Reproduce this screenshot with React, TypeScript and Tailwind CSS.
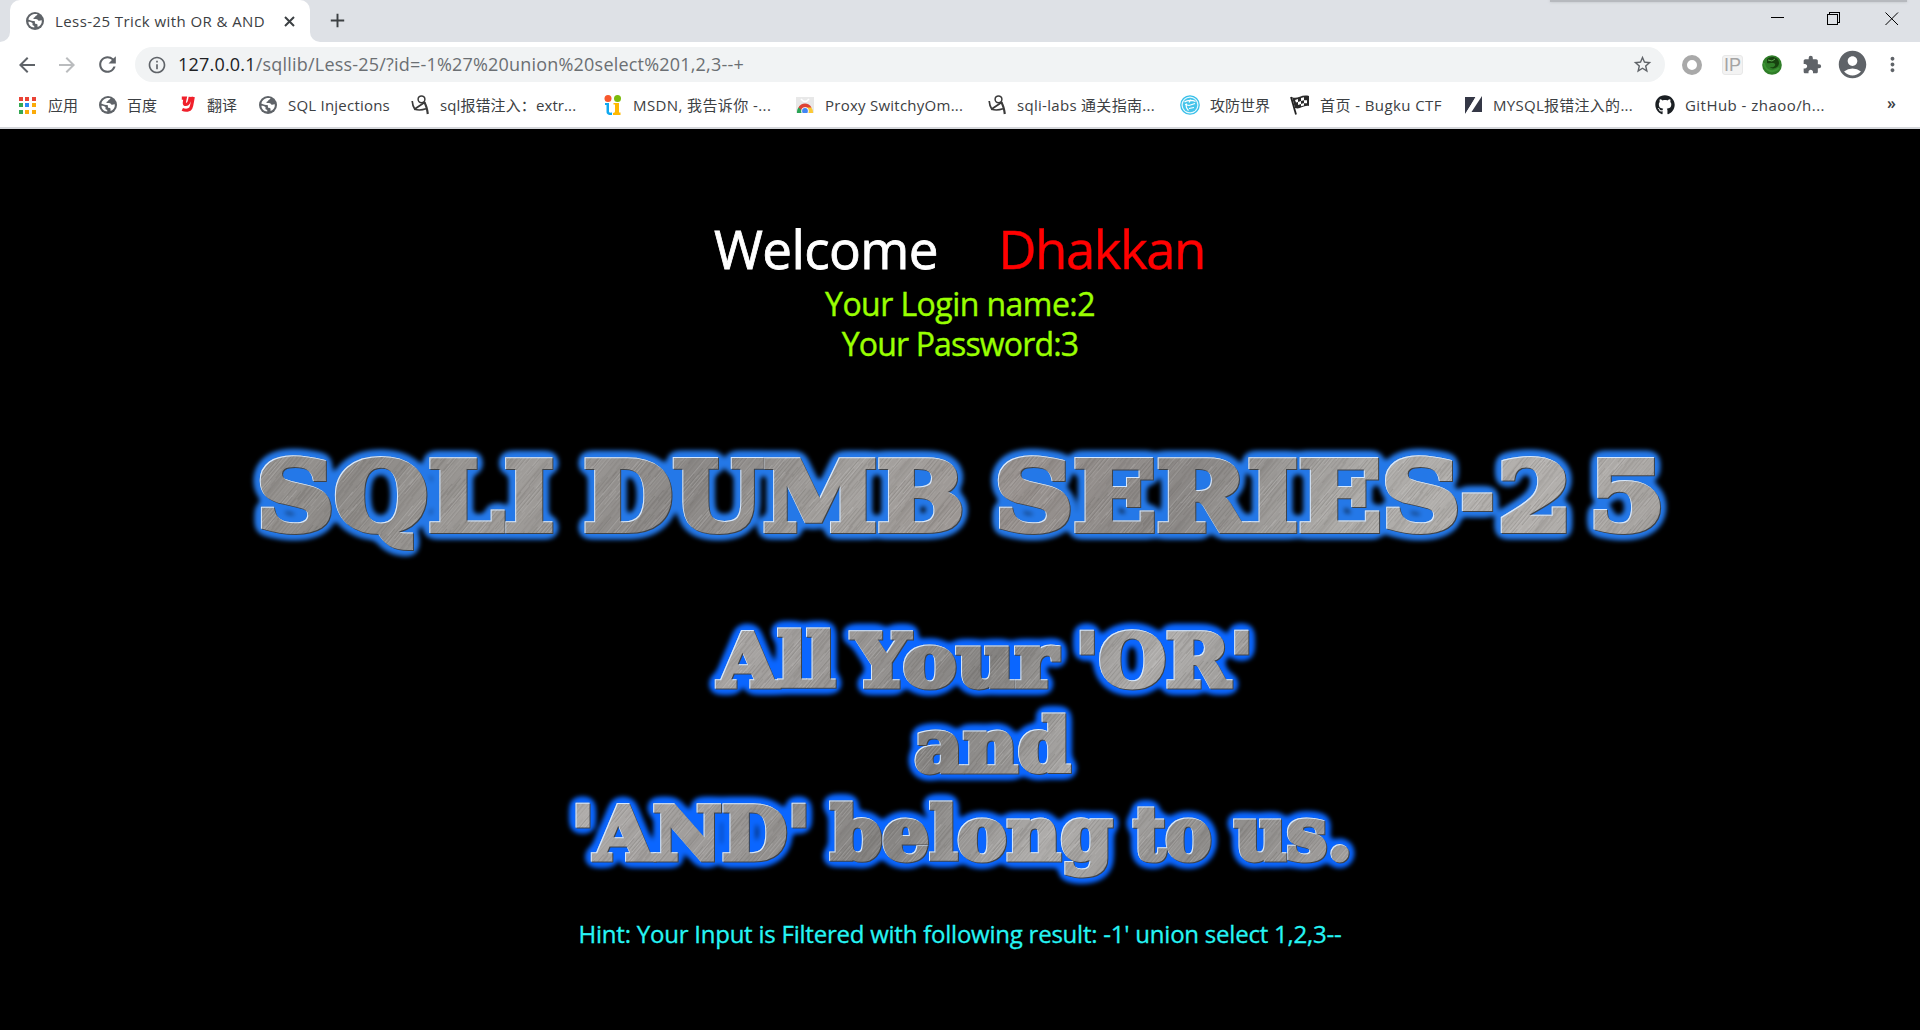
import React from "react";
import {
  MdAccountCircle, MdArrowBack, MdArrowForward, MdExtension, MdInfoOutline,
  MdMoreVert, MdRefresh, MdStarBorder, MdAdd,
} from "react-icons/md";
import { FaGithub } from "react-icons/fa";

const ui = "font-['Open_Sans','Noto_Sans_CJK_SC',sans-serif]";

/* Dark disc with light continents, used for sites without a favicon. */
function Globe() {
  return (
    <svg viewBox="0 0 18 18" className="size-[18px]">
      <circle cx="9" cy="9" r="9" fill="#5f6368" />
      <path d="M11.300 2c.3 1-.5 1.400-1.300 1.700-.9.400-.6 1.300-1.600 1.700-.8.300-1.200.8-.9 1.400.6.500 2.200.2 3.400.5 1 .3 1 1.300 1.900 1.500 1 .3 1.600-.6 3-.4.300 3-1.400 5.600-4.100 6.600-.5-1.200.2-1.900-.5-2.700-.7-.6-1.800-.2-2.200-1.100-.3-.9.300-1.600-.6-2.100-1.700-.2-3.600-.3-6.100-1.700C2.900 4.700 5 2.400 8 1.900z" fill="#fff" />
      <path d="M2.400 9.800c1.500 0 3.100.3 4 1.300.6 1-.3 1.500.3 2.200.6.600 1.500.5 1.600 1.300v1C4.900 15.200 2.600 13 2.400 9.800z" fill="#fff" />
    </svg>
  );
}

function AppsIcon() {
  const colors = ["#ea4335", "#ea4335", "#ea4335", "#34a853", "#2b8af7", "#fbab09", "#34a853", "#fbab09", "#fbab09"];
  return (
    <span className="mr-1 grid w-[17px] grid-cols-3 gap-[2.5px]">
      {colors.map((c, i) => <i key={i} className="size-1" style={{ background: c }} />)}
    </span>
  );
}

function YoudaoIcon() {
  return (
    <svg viewBox="0 0 14 16" className="mb-0.5 h-4 w-3.5" fill="none" stroke="#f0202b" strokeWidth="3.200">
      <path d="M.8 2.200h3.400c-.8 3.500-1.800 6.300.8 6.300 2.300 0 3.600-3 4.200-7.600M12.300.8C11.300 5 11.300 9 9.800 12c-1 2.200-5 3-8.500 1.400" />
    </svg>
  );
}

function FigureIcon() {
  return (
    <svg viewBox="0 0 19 20" className="h-5 w-[19px]" fill="none" stroke="#3a3a3a">
      <circle cx="10.500" cy="4.300" r="3.400" strokeWidth="1.500" />
      <path d="M1.200 6c.3 3.500 1 6 2.500 8l10.500-7" strokeWidth="1.700" />
      <path d="M13.200 7c1.500 2.500 3 7 3.600 12" strokeWidth="2.200" />
      <path d="M3.500 14.300c3.500 1 8 .7 11.500-.5" strokeWidth="1.600" />
    </svg>
  );
}

function MsdnIcon() {
  return (
    <svg viewBox="0 0 18 20" className="h-5 w-[18px]">
      <circle cx="4" cy="3.500" r="3.500" fill="#f8582c" />
      <circle cx="13.500" cy="3.500" r="3.500" fill="#7cbb0b" />
      <path d="M1 8h4v8.500c0 1.200 1.500 1.300 3 1v2.500c-4 .5-5.500-1-5.500-3.200V10H1z" fill="#10a8f0" />
      <path d="M9 20v-2c1.500 0 2-.7 2-2V9.500H9.500V8H15v9.500h1.500V20z" fill="#ffb900" />
    </svg>
  );
}

function StoreIcon() {
  return (
    <svg viewBox="0 0 18 16" className="h-4 w-[18px]">
      <path d="M0 0h18v16H0z" fill="#e8e8e8" />
      <path d="M5 2q4 5 8 0" stroke="#fff" strokeWidth="1.500" fill="none" />
      <path d="M1 16a8 8 0 0 1 3-7l4 7z" fill="#28a454" />
      <path d="M17 16a8 8 0 0 0-2-6h-5v6z" fill="#fcc934" />
      <path d="M2.500 10.500C5 5 13 5 15.500 10.500H9l-3 3z" fill="#de4335" />
      <circle cx="9" cy="14" r="3.800" fill="#fff" /><circle cx="9" cy="14" r="2.900" fill="#4285f4" />
    </svg>
  );
}

function XctfIcon() {
  return (
    <svg viewBox="0 0 20 20" className="size-5">
      <circle cx="10" cy="10" r="9.200" fill="#e9f8fd" stroke="#38bfe9" strokeWidth="1.300" />
      <circle cx="10" cy="10" r="7.300" fill="#45c4ea" />
      <path d="M4.500 7c3-2 8-2 11-.5M5 9.500l4 1 6-2M6.500 8.500c-1 3 0 5 2 7M9 13.500l5-1M11 4.500l-2 3" stroke="#fff" strokeWidth="1.200" fill="none" />
    </svg>
  );
}

function FlagIcon() {
  return (
    <svg viewBox="0 0 20 20" className="size-5">
      <path d="M1 2l5 17.500" stroke="#222" strokeWidth="1.800" />
      <path d="M2 2c5 3 9-3 17-1v10c-6-1-9 4-14 2z" fill="#2a2a2a" />
      <path d="M5 5l3-1v3l-2 .5zM11 3l3-.8v3l-3 .8zM8 7l3-1v3l-3 1zM14 5.200l3 0v3l-3 0zM11 9l3-1v2.500l-3 .8z" fill="#fff" />
    </svg>
  );
}

function SlashIcon() {
  return (
    <svg viewBox="0 0 17 18" className="h-[18px] w-[17px]" fill="#343746">
      <path d="M0 1h11L0 18zM17 0v16H6.500z" /><path d="M11.500 0L1 18" stroke="#fff" strokeWidth="1" />
    </svg>
  );
}

const bookmarks: { icon: React.ReactNode; label: string; box: string; track: string }[] = [
  { icon: <AppsIcon />, label: "应用", box: "w-[79px]", track: "" },
  { icon: <Globe />, label: "百度", box: "w-[80px]", track: "" },
  { icon: <YoudaoIcon />, label: "翻译", box: "w-[80px]", track: "" },
  { icon: <Globe />, label: "SQL Injections", box: "w-[152px]", track: "tracking-[0.22px] pl-px" },
  { icon: <FigureIcon />, label: "sql报错注入：extr...", box: "w-[193px]", track: "tracking-[0.1px] pl-px" },
  { icon: <MsdnIcon />, label: "MSDN, 我告诉你 -...", box: "w-[192px]", track: "tracking-[0.4px] pl-px" },
  { icon: <StoreIcon />, label: "Proxy SwitchyOm...", box: "w-[192px]", track: "tracking-[0.25px] pl-px" },
  { icon: <FigureIcon />, label: "sqli-labs 通关指南...", box: "w-[193px]", track: "tracking-[0.3px] pl-px" },
  { icon: <XctfIcon />, label: "攻防世界", box: "w-[110px]", track: "pl-px" },
  { icon: <FlagIcon />, label: "首页 - Bugku CTF", box: "w-[173px]", track: "tracking-[0.42px] pl-px" },
  { icon: <SlashIcon />, label: "MYSQL报错注入的...", box: "w-[192px]", track: "tracking-[0.28px] pl-px" },
  { icon: <FaGithub className="size-[20px] text-[#1b1f23]" />, label: "GitHub - zhaoo/h...", box: "w-[180px]", track: "tracking-[0.46px] pl-px" },
];

type Word = { t: string; x: number; y: number; w: number };

const seriesWords: Word[] = [
  { t: "SQLI", x: 256, y: 529.5, w: 298 },
  { t: "DUMB", x: 583, y: 529.5, w: 381 },
  { t: "SERIES", x: 994, y: 529.5, w: 466 },
  { t: "-", x: 1460, y: 527, w: 34 },
  { t: "2", x: 1497, y: 529.5, w: 75 },
  { t: "5", x: 1588, y: 529.5, w: 77 },
];

const belongWords: Word[] = [
  { t: "All", x: 718, y: 686, w: 117 },
  { t: "Your", x: 852, y: 686, w: 205 },
  { t: "'OR'", x: 1075, y: 686, w: 178 },
  { t: "and", x: 914, y: 771, w: 156 },
  { t: "'AND'", x: 571, y: 858.5, w: 239 },
  { t: "belong", x: 830, y: 858.5, w: 282 },
  { t: "to", x: 1133, y: 858.5, w: 78 },
  { t: "us.", x: 1234, y: 858.5, w: 118 },
];

/* Fine scratches of the brushed-metal texture. */
const streaks = Array.from({ length: 150 }, (_, i) => ({
  x: ((i * 37) % 83) + 0.5,
  y: (i * 53) % 131,
  h: 18 + ((i * 31) % 45),
  o: 0.04 + ((i * 29) % 17) / 140,
  dark: (i * 7) % 3 !== 0,
}));

function MetalArt({ id, words, size, weight, glow, area, className, stops }: {
  id: string; words: Word[]; size: number; weight: number; glow: string;
  area: [number, number, number, number]; className: string; stops: string[];
}) {
  const [x, y, width, height] = area;
  const rect = { x: 0, y: 0, width, height };
  const fillUrl = `url(#${id}-metal)`;
  return (
    <svg viewBox={area.join(" ")} className={className} fontFamily="'DejaVu Serif', serif" fontWeight="700" fontSize={size}>
      <defs>
        <linearGradient id={`${id}-tone`} gradientUnits="userSpaceOnUse" x1="0" x2={width} y1="0" y2={width * 0.6}>
          {stops.map((c, i) => <stop key={i} offset={i / (stops.length - 1)} stopColor={c} />)}
        </linearGradient>
        <pattern id={`${id}-streak`} width="83" height="131" patternUnits="userSpaceOnUse" patternTransform="rotate(40)">
          {streaks.map((s, i) => (
            <path key={i} d={`M${s.x} ${s.y}v${s.h}M${s.x} ${s.y - 131}v${s.h}`} stroke={s.dark ? "#35312d" : "#ffffff"} strokeOpacity={s.o} strokeWidth="1" />
          ))}
        </pattern>
        <pattern id={`${id}-metal`} patternUnits="userSpaceOnUse" x={x} y={y} width={width} height={height}>
          <rect {...rect} fill={`url(#${id}-tone)`} />
          <rect {...rect} fill={`url(#${id}-streak)`} />
        </pattern>
        <filter id={`${id}-fx`} filterUnits="userSpaceOnUse" x={x} y={y} width={width} height={height} colorInterpolationFilters="sRGB">
          <feGaussianBlur in="SourceAlpha" stdDeviation="5" result="wide" />
          <feComponentTransfer in="wide" result="solid"><feFuncA type="linear" slope="16" intercept="-0.700" /></feComponentTransfer>
          <feGaussianBlur in="solid" stdDeviation="2.200" result="halo" />
          <feFlood floodColor={glow} />
          <feComposite in2="halo" operator="in" result="glow" />
          <feFlood floodColor="#d5e8ff" />
          <feComposite in2="SourceAlpha" operator="in" result="lightShape" />
          <feFlood floodColor="#3f4348" />
          <feComposite in2="SourceAlpha" operator="in" result="darkShape" />
          <feOffset in="darkShape" dx="1" dy="0.800" result="low" />
          <feOffset in="SourceAlpha" dx="1" dy="1.200" result="inner" />
          <feComposite in="lightShape" in2="inner" operator="out" result="rim" />
          <feMerge>
            <feMergeNode in="glow" /><feMergeNode in="low" /><feMergeNode in="SourceGraphic" /><feMergeNode in="rim" />
          </feMerge>
        </filter>
      </defs>
      <g filter={`url(#${id}-fx)`} fill={fillUrl} stroke={fillUrl} strokeWidth={weight} strokeLinejoin="miter" strokeMiterlimit="2">
        {words.map((w) => (
          <text key={w.t} x={w.x} y={w.y} textLength={w.w} lengthAdjust="spacingAndGlyphs">{w.t}</text>
        ))}
      </g>
    </svg>
  );
}

export default function App() {
  return (
    <div className={`flex h-[1030px] w-[1920px] flex-col overflow-hidden bg-black ${ui}`}>
      <div className="relative flex h-[42px] shrink-0 bg-[#dee1e6]">
        <div className="w-2.5 bg-white"><div className="h-full rounded-br-[10px] bg-[#dee1e6]" /></div>
        <div className="flex w-[300px] items-center rounded-t-[10px] bg-white pl-4">
          <Globe />
          <span className="ml-[11px] w-[211px] text-[15px] tracking-[0.42px] whitespace-nowrap text-[#3c4043]">Less-25 Trick with OR &amp; AND</span>
          <svg viewBox="0 0 11 11" className="ml-[18px] size-[11px]" stroke="#3c4043" strokeWidth="2"><path d="M1 1l9 9M10 1l-9 9" /></svg>
        </div>
        <div className="w-2.5 bg-white"><div className="h-full rounded-bl-[10px] bg-[#dee1e6]" /></div>
        <MdAdd className="mt-[9px] ml-[6px] size-[23px] text-[#3c4043]" />
        <div className="absolute top-0 left-[1550px] h-[2px] w-[357px] bg-[#b6b9be] shadow-[0_0_3px_#b6b9be]" />
        <svg viewBox="0 0 128 14" className="mt-3 mr-[21px] ml-auto h-3.5 w-32" fill="none" stroke="#000" strokeWidth="1" shapeRendering="crispEdges">
          <path d="M0 5.500h13M56.500 2.500h10v10h-10zM58.500 2.500v-2h10v10h-2" />
          <path d="M114.500.5l12.500 12.500M127 .5l-12.500 12.500" shapeRendering="auto" />
        </svg>
      </div>

      <div className="flex h-[45px] shrink-0 items-center bg-white pl-[15px]">
        <MdArrowBack className="size-6 text-[#5f6368]" />
        <MdArrowForward className="ml-4 size-6 text-[#babcbe]" />
        <MdRefresh className="ml-4 size-[25px] text-[#5f6368]" />
        <div className="ml-[15px] flex h-[35px] w-[1530px] items-center rounded-full bg-[#f1f3f4] pl-[12px]">
          <MdInfoOutline className="size-5 text-[#5f6368]" />
          <span className="ml-[11px] text-[18px] tracking-[0.2px] whitespace-pre text-[#6b6f73]"><span className="text-[#202124]">127.0.0.1</span>/sqllib/Less-25/?id=-1%27%20union%20select%201,2,3--+</span>
          <MdStarBorder className="mr-3 ml-auto size-[21px] text-[#5f6368]" />
        </div>
        <span className="ml-[17px] size-5 rounded-full border-[5px] border-[#a9a9a9] bg-white" />
        <span className="ml-5 flex h-5 w-[21px] items-center justify-center rounded-[3px] border border-[#e8e8e8] bg-[#f3f3f3] font-['Liberation_Sans',sans-serif] text-[18px] leading-none text-[#a4a4a4]">IP</span>
        <svg viewBox="0 0 20 20" className="ml-[19px] size-5">
          <circle cx="10" cy="10" r="9.800" fill="#2f7d28" />
          <path d="M5 4c4-4 12-2 12 4 0 5-7 7-9 4 3 1 6-1 5-3S8 9 5 8z" fill="#17430f" />
          <path d="M2 8c1 8 9 11 15 5" stroke="#3c9434" strokeWidth="2" fill="none" />
          <path d="M6 5l4 1 3-2" stroke="#62ac55" fill="none" />
        </svg>
        <MdExtension className="ml-5 size-5 text-[#5f6368]" />
        <MdAccountCircle className="ml-[14px] size-[33px] text-[#5f6368]" />
        <MdMoreVert className="ml-[12px] size-[23px] text-[#5f6368]" />
      </div>

      <div className="flex h-[42px] shrink-0 items-center border-b-2 border-[#d5d7db] bg-white pb-1 pl-[17px] text-[15px] text-[#3c4043]">
        {bookmarks.map((b) => (
          <div key={b.label} className={`flex shrink-0 items-center ${b.box}`}>
            <span className="mr-[7px] flex h-[22px] w-6 shrink-0 items-center justify-center">{b.icon}</span>
            <span className={`whitespace-nowrap ${b.track}`}>{b.label}</span>
          </div>
        ))}
        <span className="ml-auto pr-6 pb-1 text-[16px] font-semibold">»</span>
      </div>

      <main className="flex grow flex-col items-center">
        <h1 className="mt-[85px] flex h-[70px] w-[492px] items-center justify-between text-[53px] leading-[74px] whitespace-nowrap text-white">
          <span className="tracking-[-0.6px] [-webkit-text-stroke:0.8px_#fff]">Welcome</span>
          <span className="pr-px tracking-[-1.6px] text-[#ff0000] [-webkit-text-stroke:0.4px_#f00]">Dhakkan</span>
        </h1>
        <p className="h-10 text-[32px] leading-[40px] tracking-[-0.55px] text-[#99ff00] [-webkit-text-stroke:0.4px_#9f0]">Your Login name:2</p>
        <p className="h-10 text-[32px] leading-[40px] tracking-[-0.85px] text-[#99ff00] [-webkit-text-stroke:0.4px_#9f0]">Your Password:3</p>
        <MetalArt id="series" words={seriesWords} size={95} weight={6} glow="#2478e8" area={[220, 430, 1480, 140]} className="mt-[66px] h-[140px] w-[1480px] shrink-0" stops={["#9b9895", "#8e8b88", "#a09d9a", "#8b8886", "#a5a29f", "#98928f", "#8b8886", "#adaba8", "#b4b1ae", "#a3a09d", "#b4b1ae", "#aaa7a4", "#b8b5b2"]} />
        <MetalArt id="belong" words={belongWords} size={73} weight={5} glow="#0a66ff" area={[540, 600, 840, 300]} className="mt-[30px] h-[300px] w-[840px] shrink-0" stops={["#a8a5a3", "#b0adab", "#9c9997", "#858381", "#b0aeac", "#8f8d8b", "#a29f9d", "#aeacaa"]} />
        <p className="mt-3.5 text-[24px] leading-[40px] tracking-[-0.23px] text-[#26f5f5] [-webkit-text-stroke:0.3px_#26f5f5]">Hint: Your Input is Filtered with following result: -1' union select 1,2,3--</p>
      </main>
    </div>
  );
}
